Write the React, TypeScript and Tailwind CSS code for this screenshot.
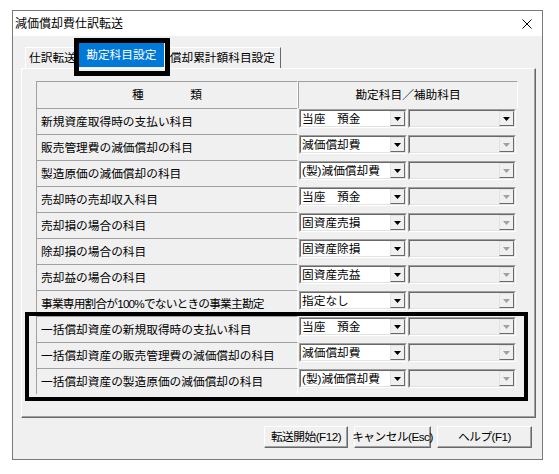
import React from "react";

interface Row {
  label: string;
  account: string;
  subEnabled?: boolean;
  tight?: boolean;
}

const rows: Row[] = [
  { label: "新規資産取得時の支払い科目", account: "当座　預金", subEnabled: true },
  { label: "販売管理費の減価償却の科目", account: "減価償却費" },
  { label: "製造原価の減価償却の科目", account: "(製)減価償却費" },
  { label: "売却時の売却収入科目", account: "当座　預金" },
  { label: "売却損の場合の科目", account: "固資産売損" },
  { label: "除却損の場合の科目", account: "固資産除損" },
  { label: "売却益の場合の科目", account: "固資産売益" },
  { label: "事業専用割合が100%でないときの事業主勘定", account: "指定なし", tight: true },
];

const bulkRows: Row[] = [
  { label: "一括償却資産の新規取得時の支払い科目", account: "当座　預金" },
  { label: "一括償却資産の販売管理費の減価償却の科目", account: "減価償却費" },
  { label: "一括償却資産の製造原価の減価償却の科目", account: "(製)減価償却費" },
];

function DownArrow({ disabled }: { disabled?: boolean }) {
  return (
    <svg width="7" height="4" viewBox="0 0 7 4">
      <path d="M0 0h7L3.5 4z" fill={disabled ? "#a0a0a0" : "#000"} />
    </svg>
  );
}

function Combo({ text, disabled, white }: { text?: string; disabled?: boolean; white?: boolean }) {
  return (
    <div className="h-[19px] w-[108px] border border-t-[#a0a0a0] border-l-[#a0a0a0] border-r-white border-b-white">
      <div
        className={`flex h-full w-full border border-t-[#696969] border-l-[#696969] border-r-[#e3e3e3] border-b-[#e3e3e3] ${
          white ? "bg-white" : "bg-[#f0f0f0]"
        }`}
      >
        <div className="flex flex-1 items-center overflow-hidden whitespace-nowrap pl-[1px] text-[11.7px] leading-none">
          {text}
        </div>
        <div className="flex w-[15px] items-center justify-center border border-t-[#e3e3e3] border-l-[#e3e3e3] border-r-[#696969] border-b-[#696969] bg-[#f0f0f0]">
          <DownArrow disabled={disabled} />
        </div>
      </div>
    </div>
  );
}

function TableRow({ row }: { row: Row }) {
  return (
    <div className="flex h-[26px]">
      <div
        className={`flex w-[262px] items-center border-t border-l border-t-[#a0a0a0] border-l-[#a0a0a0] border-r border-r-white pl-[4px] text-[11.7px] leading-none whitespace-nowrap ${
          row.tight ? "tracking-[-0.8px]" : ""
        }`}
      >
        {row.label}
      </div>
      <div className="flex flex-1 items-start gap-[1px] pt-[1px] pl-[1px]">
        <Combo text={row.account} white />
        <Combo disabled={!row.subEnabled} />
      </div>
    </div>
  );
}

function Button({ label, width }: { label: string; width: string }) {
  return (
    <div
      className={`flex h-[22px] ${width} items-center justify-center whitespace-nowrap border border-t-white border-l-white border-r-[#696969] border-b-[#696969] bg-[#f0f0f0] text-[11.7px] leading-none tracking-[-0.5px] shadow-[inset_-1px_-1px_0_#a0a0a0]`}
    >
      {label}
    </div>
  );
}

export default function App() {
  return (
    <div
      className="h-[474px] w-[559px] bg-white pt-[10px] pl-[12px] text-black"
      style={{ fontFamily: '"Liberation Sans", "Noto Sans CJK JP", sans-serif' }}
    >
      <div className="flex h-[450px] w-[531px] flex-col border border-[#7a7a7a] bg-[#f0f0f0]">
        {/* title bar */}
        <div className="flex h-[25px] items-center justify-between bg-white pl-[2px] pr-[10px]">
          <span className="text-[12px] leading-none">減価償却費仕訳転送</span>
          <svg width="10" height="10" viewBox="0 0 10 10">
            <path d="M0.5 0.5l9 9M9.5 0.5l-9 9" stroke="#000" strokeWidth="1" />
          </svg>
        </div>

        <div className="flex flex-col pl-[8px] pr-[6px]">
          {/* tabs */}
          <div className="mt-[7px] flex h-[25px] items-end pl-[4px]">
            <div className="flex h-[21px] items-center border-t border-l border-white px-[3px] text-[11.7px] leading-none">
              仕訳転送
            </div>
            <div className="relative mb-[1px] flex h-[24px] w-[85px] items-center justify-center bg-[#0078d7] text-[11.7px] leading-none text-white">
              勘定科目設定
              <div className="pointer-events-none absolute -top-[5px] -right-[6px] -bottom-[9px] -left-[5px] border-[5px] border-black" />
            </div>
            <div className="flex h-[21px] items-center border-t border-l border-white border-r border-r-[#696969] px-[5px] text-[11.7px] leading-none">
              償却累計額科目設定
            </div>
          </div>

          {/* panel */}
          <div className="h-[350px] border border-t-white border-l-white border-r-[#696969] border-b-[#696969] pt-[12px] pl-[14px] shadow-[inset_-1px_-1px_0_#a0a0a0]">
            <div className="w-[482px]">
              <div className="flex h-[27px]">
                <div className="flex w-[262px] items-center justify-center border-t border-l border-t-[#a0a0a0] border-l-[#a0a0a0] border-r border-r-white text-[11.7px] leading-none">
                  種　　　　類
                </div>
                <div className="flex flex-1 items-center justify-center border-t border-l border-t-[#a0a0a0] border-l-[#a0a0a0] border-r border-r-white text-[11.7px] leading-none">
                  勘定科目／補助科目
                </div>
              </div>
              {rows.map((row) => (
                <TableRow key={row.label} row={row} />
              ))}
              <div className="relative">
                {bulkRows.map((row) => (
                  <TableRow key={row.label} row={row} />
                ))}
                <div className="pointer-events-none absolute -top-[4px] -right-[10px] -bottom-[7px] -left-[11px] border-4 border-black" />
              </div>
            </div>
          </div>

          {/* buttons */}
          <div className="mt-[8px] flex justify-end gap-[6px] pr-[4px]">
            <Button label="転送開始(F12)" width="w-[84px]" />
            <Button label="キャンセル(Esc)" width="w-[77px]" />
            <Button label="ヘルプ(F1)" width="w-[95px]" />
          </div>
        </div>
      </div>
    </div>
  );
}
